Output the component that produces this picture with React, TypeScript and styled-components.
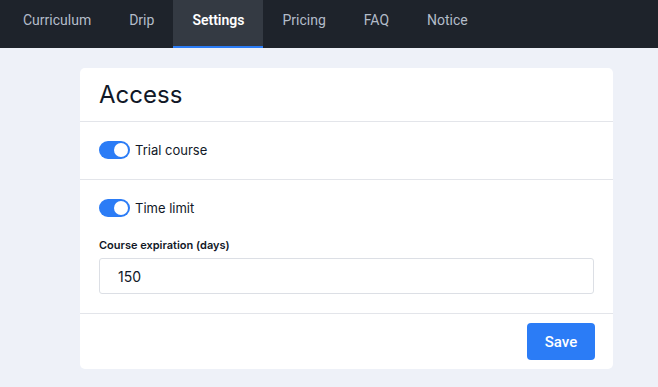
import React, { useState } from 'react';
import styled, { createGlobalStyle } from 'styled-components';

const GlobalStyle = createGlobalStyle`
    body {
        margin: 0;
        background: #eef1f8;
        font-family: Inter, "Noto Sans", sans-serif;
    }
`

const NavBar = styled.nav`
    display: flex;
    height: 48px;
    background: #1e232b;
    padding-left: 4px;
`

const Tab = styled.div<{ $active?: boolean }>`
    display: flex;
    align-items: center;
    padding: 0 19px 6px;
    box-sizing: border-box;
    font-family: Roboto, Inter, sans-serif;
    font-size: 14px;
    color: ${props => props.$active ? '#ffffff' : '#b3bcc9'};
    font-weight: ${props => props.$active ? 600 : 400};
    background: ${props => props.$active ? '#343a43' : 'transparent'};
    border-bottom: 2px solid ${props => props.$active ? '#2b7cf6' : 'transparent'};
`

const Page = styled.main`
    padding: 20px 45px 17px 80px;
`

const Card = styled.section`
    background: #fff;
    border-radius: 5px;
    color: #111827;
`

const CardHeader = styled.h2`
    margin: 0;
    padding: 12px 19px 12px;
    font-size: 24px;
    font-weight: 400;
    line-height: 29px;
    border-bottom: 1px solid #e3e5ea;
`

const Section = styled.div`
    padding: 18px 19px 19px;
    border-bottom: 1px solid #e3e5ea;
`

const ToggleRow = styled.label`
    display: flex;
    align-items: center;
    gap: 5px;
    font-size: 13px;
    height: 20px;
    cursor: pointer;
`

const Track = styled.span<{ $on: boolean }>`
    position: relative;
    width: 31px;
    height: 18px;
    border-radius: 9px;
    background: ${props => props.$on ? '#2b7cf6' : '#ced4da'};
`

const Knob = styled.span<{ $on: boolean }>`
    position: absolute;
    top: 2px;
    left: ${props => props.$on ? '15px' : '2px'};
    width: 14px;
    height: 14px;
    border-radius: 50%;
    background: #fff;
`

const FieldLabel = styled.div`
    margin-top: 20px;
    font-size: 11px;
    font-weight: 600;
    line-height: 14px;
`

const Input = styled.input`
    display: block;
    width: 100%;
    box-sizing: border-box;
    margin-top: 6px;
    height: 36px;
    padding: 0 18px;
    font-family: Inter, sans-serif;
    font-size: 14px;
    color: #111827;
    border: 1px solid #dcdfe5;
    border-radius: 3px;
    outline: none;
`

const Footer = styled.div`
    display: flex;
    justify-content: flex-end;
    padding: 9px 18px 9px;
`

const SaveButton = styled.button`
    width: 68px;
    height: 37px;
    border: none;
    border-radius: 4px;
    background: #2b7cf6;
    color: #fff;
    font-family: Roboto, Inter, sans-serif;
    font-size: 15px;
    font-weight: 500;
`

const Toggle = ({ label, on, onToggle }: { label: string, on: boolean, onToggle: () => void }) =>
    <ToggleRow onClick={onToggle}>
        <Track $on={on}><Knob $on={on} /></Track>
        {label}
    </ToggleRow>

export default function App() {
    const tabs = ['Curriculum', 'Drip', 'Settings', 'Pricing', 'FAQ', 'Notice'];
    const [trial, setTrial] = useState(true);
    const [limit, setLimit] = useState(true);
    const [days, setDays] = useState('150');

    return <>
        <GlobalStyle />
        <NavBar>
            {tabs.map(t => <Tab key={t} $active={t === 'Settings'}>{t}</Tab>)}
        </NavBar>
        <Page>
            <Card>
                <CardHeader>Access</CardHeader>
                <Section>
                    <Toggle label="Trial course" on={trial} onToggle={() => setTrial(!trial)} />
                </Section>
                <Section>
                    <Toggle label="Time limit" on={limit} onToggle={() => setLimit(!limit)} />
                    <FieldLabel>Course expiration (days)</FieldLabel>
                    <Input value={days} onChange={e => setDays(e.target.value)} />
                </Section>
                <Footer>
                    <SaveButton>Save</SaveButton>
                </Footer>
            </Card>
        </Page>
    </>
}
